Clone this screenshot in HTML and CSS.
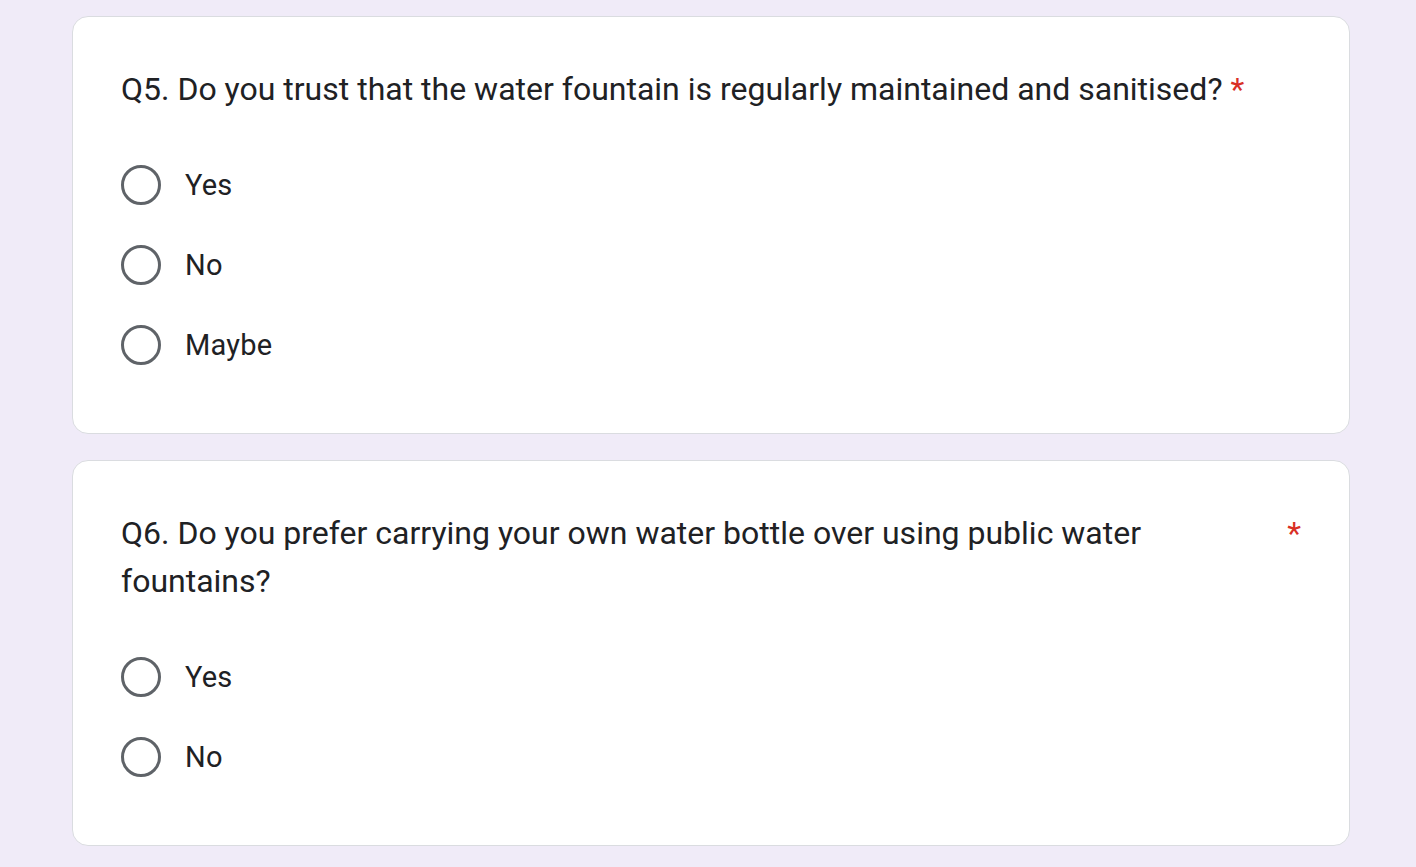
FILE: index.html
```html
<!DOCTYPE html>
<html>
<head>
<meta charset="utf-8">
<link rel="stylesheet" href="styles.css">
</head>
<body>
<div class="page">
  <div class="card">
    <div class="title"><span class="text">Q5. Do you trust that the water fountain is regularly maintained and sanitised? <span class="req">*</span></span></div>
    <div class="options">
      <div class="opt"><span class="radio"></span><span class="label">Yes</span></div>
      <div class="opt"><span class="radio"></span><span class="label">No</span></div>
      <div class="opt"><span class="radio"></span><span class="label">Maybe</span></div>
    </div>
  </div>
  <div class="card">
    <div class="title split"><span class="text">Q6. Do you prefer carrying your own water bottle over using public water fountains?</span><span class="req side">*</span></div>
    <div class="options">
      <div class="opt"><span class="radio"></span><span class="label">Yes</span></div>
      <div class="opt"><span class="radio"></span><span class="label">No</span></div>
    </div>
  </div>
</div>
</body>
</html>
```
FILE: styles.css
```css
html, body {
  margin: 0;
  padding: 0;
  background: #f0ebf8;
  font-family: Roboto, "Liberation Sans", sans-serif;
  color: #202124;
}
.page {
  padding: 16px 0 0 72px;
  display: flex;
  flex-direction: column;
  gap: 26px;
}
.card {
  width: 1278px;
  box-sizing: border-box;
  background: #fff;
  border: 1px solid #dadce0;
  border-radius: 16px;
  padding: 48px;
}
.title {
  font-size: 32px;
  line-height: 48px;
}
.title.split {
  display: flex;
}
.title.split .text {
  flex: 1;
}
.req {
  color: #d93025;
}
.side {
  padding-left: 12px;
}
.options {
  margin-top: 32px;
  display: flex;
  flex-direction: column;
}
.opt {
  height: 80px;
  display: flex;
  align-items: center;
}
.radio {
  width: 40px;
  height: 40px;
  box-sizing: border-box;
  border: 3.5px solid #5f6368;
  border-radius: 50%;
  flex: none;
}
.label {
  margin-left: 24px;
  font-size: 29px;
  letter-spacing: 0.2px;
}
```
